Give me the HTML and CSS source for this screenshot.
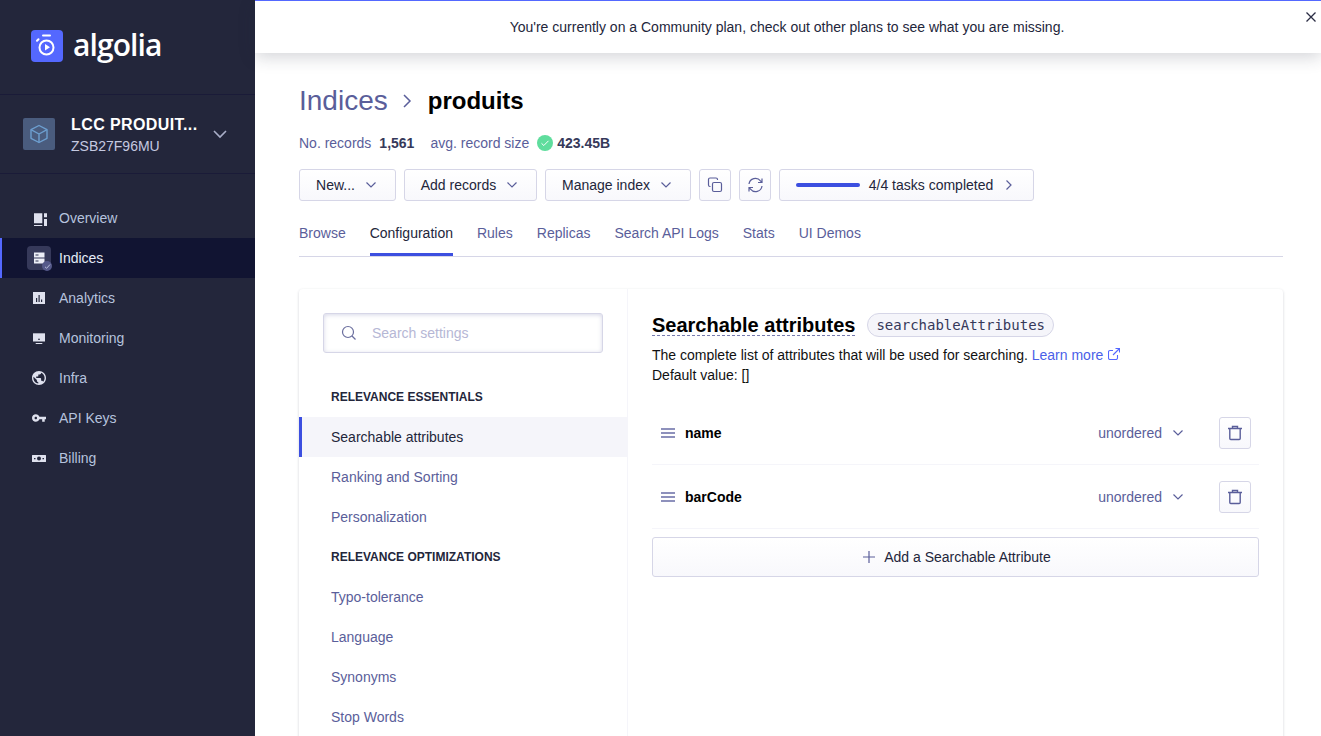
FILE: index.html
```html
<!DOCTYPE html>
<html>
<head>
  <title>Algolia - produits</title>
  <link rel="stylesheet" href="styles.css">
</head>
<body>

<div class="sidebar">
  <div class="logo">
    <div class="logoIcon">
      <svg width="32" height="32" viewBox="0 0 32 32"><g fill="none" stroke="#fff" stroke-width="2"><circle cx="15.500" cy="17.500" r="7"/><path d="M12 5.500h7" stroke-linecap="round"/><path d="M7.500 9.200l-1.500 1.500" stroke-linecap="round"/></g><path d="M14 14l5 3.300-5 3.200z" fill="#fff"/></svg>
    </div>
    <span class="logoText">algolia</span>
  </div>

  <div class="workspace">
    <div class="workspaceIcon">
      <svg width="20" height="20" viewBox="0 0 20 20" fill="none" stroke="#6d9fd0" stroke-width="1.400" stroke-linejoin="round"><path d="M10 1.500l8 4.200v8.600l-8 4.200-8-4.200V5.700z"/><path d="M2 5.700l8 4.300 8-4.300M10 10v8.500"/></svg>
    </div>
    <div class="workspaceText">
      <div class="workspaceName">LCC PRODUIT...</div>
      <div class="workspaceId">ZSB27F96MU</div>
    </div>
    <svg class="workspaceArrow" width="16" height="10" viewBox="0 0 16 10" fill="none" stroke="#a9aec8" stroke-width="1.600"><path d="M2 2l6 6 6-6"/></svg>
  </div>

  <div class="nav">
    <a class="navItem">
      <span class="navIcon">
        <svg width="16" height="16" viewBox="0 0 16 16" fill="#dfe1ee"><path d="M3 3.300h8.300v10H3zM13 3.300h3v4h-3zM13 9h3v7h-3zM3 15h8.300v1H3z"/></svg>
      </span>Overview
    </a>
    <a class="navItem active">
      <span class="navIcon box">
        <svg width="12" height="12" viewBox="0 0 12 12"><path d="M1 .5h10.500v5H1zM1 6.500h10.500v5H1z" fill="#eceef7"/><path d="M2.500 2.500h3v1h-3zM2.500 8.500h3v1h-3z" fill="#2c3050"/></svg>
        <span class="navBadge"><svg width="7" height="7" viewBox="0 0 7 7" fill="none" stroke="#b9bedb" stroke-width="1"><path d="M1 3.800l1.600 1.500L6 1.500"/></svg></span>
      </span>Indices
    </a>
    <a class="navItem">
      <span class="navIcon">
        <svg width="14" height="14" viewBox="0 0 14 14"><path d="M1 1h12v12H1z" fill="#dfe1ee"/><path d="M4 7h1.200v4H4zM6.500 4h1.200v7H6.500zM9 8.500h1.200V11H9z" fill="#23263b"/></svg>
      </span>Analytics
    </a>
    <a class="navItem">
      <span class="navIcon">
        <svg width="14" height="14" viewBox="0 0 14 14" fill="#dfe1ee"><path d="M1 2.300h12v8.200H1z"/><path d="M3.700 12h6.600v1H3.700z"/><path d="M6 7.800h2v1H6z" fill="#23263b"/></svg>
      </span>Monitoring
    </a>
    <a class="navItem">
      <span class="navIcon">
        <svg width="14" height="14" viewBox="2 2 20 20" fill="#dfe1ee"><path d="M12 2C6.480 2 2 6.480 2 12s4.480 10 10 10 10-4.480 10-10S17.520 2 12 2zm-1 17.930c-3.950-.49-7-3.850-7-7.930 0-.62.080-1.210.210-1.790L9 15v1c0 1.100.9 2 2 2v1.930zm6.900-2.540c-.26-.81-1-1.390-1.900-1.390h-1v-3c0-.55-.45-1-1-1H8v-2h2c.55 0 1-.45 1-1V7h2c1.100 0 2-.9 2-2v-.41c2.930 1.190 5 4.060 5 7.410 0 2.080-.8 3.970-2.100 5.390z"/></svg>
      </span>Infra
    </a>
    <a class="navItem">
      <span class="navIcon">
        <svg width="14" height="8" viewBox="1 6 22 12" fill="#dfe1ee"><path d="M12.650 10C11.830 7.670 9.610 6 7 6c-3.310 0-6 2.690-6 6s2.690 6 6 6c2.610 0 4.830-1.670 5.650-4H17v4h4v-4h2v-4H12.650zM7 14c-1.100 0-2-.9-2-2s.9-2 2-2 2 .9 2 2-.9 2-2 2z"/></svg>
      </span>API Keys
    </a>
    <a class="navItem">
      <span class="navIcon">
        <svg width="14" height="7" viewBox="0 0 14 7"><path d="M.5 0h13a.5.5 0 0 1 .5.5v6a.5.5 0 0 1-.5.5H.5a.5.5 0 0 1-.5-.5v-6A.5.5 0 0 1 .5 0z" fill="#dfe1ee"/><circle cx="7" cy="3.500" r="2" fill="#23263b"/><path d="M2 3h1.500v1.200H2zM10.500 3H12v1.200h-1.500z" fill="#23263b"/></svg>
      </span>Billing
    </a>
  </div>
</div>

<div class="main">
  <div class="banner">
    <span>You're currently on a Community plan, check out other plans to see what you are missing.</span>
    <svg class="bannerClose" width="12" height="12" viewBox="0 0 12 12" fill="none" stroke="#2a2c44" stroke-width="1.300"><path d="M1.500 1.500l9 9M10.500 1.500l-9 9"/></svg>
  </div>

  <div class="content">
    <div class="crumbs">
      <span class="crumbLink">Indices</span>
      <svg class="crumbArrow" width="10" height="16" viewBox="0 0 10 16" fill="none" stroke="#5a5e9a" stroke-width="1.500"><path d="M2 2l6 6-6 6"/></svg>
      <span class="crumbName">produits</span>
    </div>

    <div class="stats">
      <span>No. records</span>
      <b class="statValue">1,561</b>
      <span class="statLabel2">avg. record size</span>
      <span class="okDot"><svg width="10" height="10" viewBox="0 0 10 10" fill="none" stroke="#fff" stroke-width="1"><path d="M1.500 5.300l2.300 2.200L8.500 2.800"/></svg></span>
      <b class="statValue2">423.45B</b>
    </div>

    <div class="actions">
      <button class="btn btnNew">New...<svg class="chev" width="12" height="8" viewBox="0 0 12 8"><path d="M1.500 1.500L6 6l4.500-4.500"/></svg></button>
      <button class="btn btnAdd">Add records<svg class="chev" width="12" height="8" viewBox="0 0 12 8"><path d="M1.500 1.500L6 6l4.500-4.500"/></svg></button>
      <button class="btn btnManage">Manage index<svg class="chev" width="12" height="8" viewBox="0 0 12 8"><path d="M1.500 1.500L6 6l4.500-4.500"/></svg></button>
      <button class="btn btnIcon">
        <svg width="16" height="16" viewBox="0 0 16 16" fill="none" stroke="#5a5e9a" stroke-width="1.200"><rect x="5.500" y="5.500" width="9" height="9" rx="1.500"/><path d="M10.500 3V2.500A1.500 1.500 0 0 0 9 1H3A1.500 1.500 0 0 0 1.500 2.500V8A1.500 1.500 0 0 0 3 9.500h.5"/></svg>
      </button>
      <button class="btn btnIcon">
        <svg width="17" height="16" viewBox="0 0 17 16" fill="none" stroke="#5a5e9a" stroke-width="1.200"><path d="M2 7a6.500 6.500 0 0 1 11.500-3.200L15 5.500M15 1.500v4h-4M15 9a6.500 6.500 0 0 1-11.500 3.200L2 10.500M2 14.500v-4h4"/></svg>
      </button>
      <button class="btn btnTasks">
        <span class="taskBar"></span>
        <span>4/4 tasks completed</span>
        <svg class="taskArrow" width="8" height="12" viewBox="0 0 8 12" fill="none" stroke="#5a5e9a" stroke-width="1.200"><path d="M1.500 1.500L6 6l-4.500 4.500"/></svg>
      </button>
    </div>

    <div class="tabs">
      <a class="tab">Browse</a>
      <a class="tab current">Configuration</a>
      <a class="tab">Rules</a>
      <a class="tab">Replicas</a>
      <a class="tab">Search API Logs</a>
      <a class="tab">Stats</a>
      <a class="tab">UI Demos</a>
    </div>

    <div class="card">
      <div class="settings">
        <div class="searchBox">
          <svg width="16" height="16" viewBox="0 0 16 16" fill="none" stroke="#6a6e9e" stroke-width="1.200"><circle cx="7" cy="7" r="5.500"/><path d="M11 11l3.500 3.500"/></svg>
          <span class="searchHint">Search settings</span>
        </div>
        <div class="settingsHead">RELEVANCE ESSENTIALS</div>
        <a class="settingsItem selected">Searchable attributes</a>
        <a class="settingsItem">Ranking and Sorting</a>
        <a class="settingsItem">Personalization</a>
        <div class="settingsHead">RELEVANCE OPTIMIZATIONS</div>
        <a class="settingsItem">Typo-tolerance</a>
        <a class="settingsItem">Language</a>
        <a class="settingsItem">Synonyms</a>
        <a class="settingsItem">Stop Words</a>
      </div>

      <div class="detail">
        <div class="detailTitle">
          <h2>Searchable attributes</h2>
          <code class="pill">searchableAttributes</code>
        </div>
        <p class="detailText">The complete list of attributes that will be used for searching. <a class="learn">Learn more <svg class="learnIcon" width="12" height="12" viewBox="0 0 12 12" fill="none" stroke="#5468ff" stroke-width="1.100"><path d="M9.500 7v3a1.500 1.500 0 0 1-1.500 1.500H2A1.500 1.500 0 0 1 .5 10V4A1.500 1.500 0 0 1 2 2.500h3M7.500.5h4v4M11.500.5L5 7"/></svg></a><br>Default value: []</p>

        <div class="attrRow">
          <svg width="14" height="10" viewBox="0 0 14 10" stroke="#6a6ea6" stroke-width="1.400"><path d="M0 1h14M0 5h14M0 9h14"/></svg>
          <b class="attrName">name</b>
          <span class="attrOrder">unordered</span>
          <svg class="chev" width="12" height="8" viewBox="0 0 12 8"><path d="M1.500 1.500L6 6l4.500-4.500"/></svg>
          <button class="btn btnTrash">
            <svg width="14" height="16" viewBox="0 0 14 16" fill="none" stroke="#5a5e9a" stroke-width="1.400"><path d="M0 3.500h14M4.500 3.500V1.500h5v2M1.800 3.500v10a1 1 0 0 0 1 1h8.400a1 1 0 0 0 1-1v-10"/></svg>
          </button>
        </div>
        <div class="attrRow">
          <svg width="14" height="10" viewBox="0 0 14 10" stroke="#6a6ea6" stroke-width="1.400"><path d="M0 1h14M0 5h14M0 9h14"/></svg>
          <b class="attrName">barCode</b>
          <span class="attrOrder">unordered</span>
          <svg class="chev" width="12" height="8" viewBox="0 0 12 8"><path d="M1.500 1.500L6 6l4.500-4.500"/></svg>
          <button class="btn btnTrash">
            <svg width="14" height="16" viewBox="0 0 14 16" fill="none" stroke="#5a5e9a" stroke-width="1.400"><path d="M0 3.500h14M4.500 3.500V1.500h5v2M1.800 3.500v10a1 1 0 0 0 1 1h8.400a1 1 0 0 0 1-1v-10"/></svg>
          </button>
        </div>

        <button class="btn btnAddAttr">
          <svg width="12" height="12" viewBox="0 0 12 12" stroke="#5a5e9a" stroke-width="1.200"><path d="M6 0v12M0 6h12"/></svg>
          Add a Searchable Attribute
        </button>
      </div>
    </div>
  </div>
</div>

</body>
</html>
```

FILE: styles.css
```css
body, html {
  height: 100%;
  margin: 0;
  overflow: hidden;
  font-family: "Liberation Sans", Arial, sans-serif;
  font-size: 14px;
  color: #23263b;
  background-color: white;
}

body {
  display: flex;
}

/* sidebar */

.sidebar {
  width: 255px;
  flex-shrink: 0;
  background-color: #23263b;
}

.logo {
  height: 95px;
  box-sizing: border-box;
  padding: 30px 0 0 31px;
  display: flex;
  align-items: flex-start;
  border-bottom: 1px solid #1a1b38;
}

.logoIcon {
  width: 32px;
  height: 32px;
  background-color: #5468ff;
  border-radius: 4px;
}

.logoText {
  margin-left: 10px;
  font-family: "Open Sans", sans-serif;
  font-size: 30px;
  line-height: 30px;
  font-weight: 600;
  letter-spacing: -0.9px;
  color: white;
}

.workspace {
  height: 79px;
  box-sizing: border-box;
  padding-left: 23px;
  display: flex;
  align-items: center;
  border-bottom: 1px solid #1a1b38;
}

.workspaceIcon {
  width: 32px;
  height: 32px;
  background-color: #4a5c7e;
  border-radius: 2px;
  display: flex;
  align-items: center;
  justify-content: center;
}

.workspaceText {
  margin-left: 16px;
  width: 141px;
  padding-top: 2px;
}

.workspaceName {
  color: white;
  font-size: 16px;
  font-weight: bold;
  line-height: 20px;
  letter-spacing: 0.4px;
}

.workspaceId {
  color: #c5c9e0;
  line-height: 20px;
  margin-top: 1px;
}

.nav {
  padding-top: 24px;
}

.navItem {
  height: 40px;
  display: flex;
  align-items: center;
  color: #b6c3de;
  box-sizing: border-box;
  padding-left: 27px;
}

.navItem.active {
  background-color: #111432;
  border-left: 2px solid #5468ff;
  padding-left: 25px;
  color: #e4ebf7;
}

.navIcon {
  position: relative;
  width: 24px;
  height: 24px;
  margin-right: 8px;
  display: flex;
  align-items: center;
  justify-content: center;
}

.navIcon.box {
  background-color: #36395a;
  border-radius: 4px;
}

.navBadge {
  position: absolute;
  right: -1px;
  bottom: -1px;
  width: 10px;
  height: 10px;
  border-radius: 50%;
  background-color: #55598a;
  display: flex;
  align-items: center;
  justify-content: center;
}

/* main part */

.main {
  flex: 1;
  min-width: 0;
  display: flex;
  flex-direction: column;
}

.banner {
  position: relative;
  height: 53px;
  box-sizing: border-box;
  flex-shrink: 0;
  border-top: 1px solid #5468ff;
  display: flex;
  align-items: center;
  justify-content: center;
  padding-right: 2px;
  background-color: white;
  box-shadow: 0 4px 16px rgba(35, 38, 59, 0.2);
}

.bannerClose {
  position: absolute;
  top: 10px;
  right: 4px;
}

.content {
  padding: 0 38px 0 44px;
}

.crumbs {
  display: flex;
  align-items: center;
  margin-top: 31px;
  height: 34px;
}

.crumbLink {
  font-size: 28px;
  color: #5a5e9a;
}

.crumbArrow {
  margin: 0 16px 0 14px;
}

.crumbName {
  font-size: 24px;
  font-weight: bold;
  color: black;
}

.stats {
  display: flex;
  align-items: center;
  margin-top: 15px;
  height: 20px;
  color: #5a5e9a;
}

.statValue {
  margin-left: 8px;
  color: #36395a;
}

.statLabel2 {
  margin-left: 16px;
}

.okDot {
  width: 16px;
  height: 16px;
  margin-left: 8px;
  border-radius: 50%;
  background-color: #5fdd9d;
  display: flex;
  align-items: center;
  justify-content: center;
}

.statValue2 {
  margin-left: 4px;
  color: #36395a;
}

.actions {
  display: flex;
  gap: 8px;
  margin-top: 16px;
}

.btn {
  height: 32px;
  box-sizing: border-box;
  font-family: "Liberation Sans", Arial, sans-serif;
  font-size: 14px;
  color: #23263b;
  background: linear-gradient(#ffffff, #f8f8fc);
  border: 1px solid #d6d6e7;
  border-radius: 3px;
  display: flex;
  align-items: center;
  justify-content: center;
  padding: 0;
}

.chev {
  fill: none;
  stroke: #5a5e9a;
  stroke-width: 1.2;
}

.btnNew {
  width: 97px;
  padding-right: 2px;
}

.btnNew .chev, .btnAdd .chev, .btnManage .chev {
  margin-left: 10px;
}

.btnAdd {
  width: 133px;
  padding-right: 2px;
}

.btnManage {
  width: 146px;
  padding-right: 2px;
}

.btnIcon {
  width: 32px;
}

.btnTasks {
  width: 255px;
  padding-right: 4px;
}

.taskBar {
  width: 64px;
  height: 4px;
  border-radius: 2px;
  background-color: #3c4fe0;
  margin-right: 9px;
}

.taskArrow {
  margin-left: 12px;
}

.tabs {
  display: flex;
  gap: 24px;
  margin-top: 16px;
  height: 39px;
  border-bottom: 1px solid #d6d6e7;
}

.tab {
  height: 39px;
  box-sizing: border-box;
  line-height: 33px;
  color: #5a5e9a;
}

.tab.current {
  color: #23263b;
  border-bottom: 3px solid #3c4fe0;
}

.card {
  display: flex;
  margin-top: 32px;
  height: 600px;
  border-radius: 4px;
  box-shadow: 0 1px 3px rgba(35, 38, 59, 0.2);
}

.settings {
  width: 328px;
  flex-shrink: 0;
  border-right: 1px solid #f5f5fa;
}

.searchBox {
  margin: 24px;
  height: 40px;
  box-sizing: border-box;
  border: 1px solid #d6d6e7;
  border-radius: 3px;
  box-shadow: inset 0 1px 4px rgba(119, 122, 175, 0.3);
  display: flex;
  align-items: center;
  padding-left: 17px;
}

.searchHint {
  margin-left: 15px;
  color: #b6b7d5;
}

.settingsHead {
  height: 40px;
  line-height: 40px;
  padding-left: 32px;
  font-size: 12px;
  font-weight: bold;
  color: #23263b;
}

.settingsItem {
  display: block;
  height: 40px;
  line-height: 40px;
  padding-left: 32px;
  color: #5a5e9a;
}

.settingsItem.selected {
  padding-left: 29px;
  border-left: 3px solid #3c4fe0;
  background-color: #f5f5fa;
  color: #23263b;
}

.detail {
  flex: 1;
  min-width: 0;
  padding: 24px 24px 0 24px;
}

.detailTitle {
  display: flex;
  align-items: center;
  height: 24px;
}

.detailTitle h2 {
  margin: 0;
  font-size: 20px;
  line-height: 20px;
  color: black;
  border-bottom: 1px dashed #777aaf;
}

.pill {
  margin-left: 12px;
  height: 24px;
  box-sizing: border-box;
  padding: 0 8px;
  line-height: 22px;
  font-family: "DejaVu Sans Mono", monospace;
  font-size: 14px;
  color: #36395a;
  background-color: #f5f5fa;
  border: 1px solid #d6d6e7;
  border-radius: 12px;
}

.detailText {
  margin: 8px 0 0 0;
  line-height: 20px;
  color: #111;
}

.learn {
  color: #4a5fe8;
}

.learnIcon {
  margin-left: 1px;
}

.attrRow {
  display: flex;
  align-items: center;
  height: 64px;
  box-sizing: border-box;
  padding: 0 8px 0 9px;
  border-bottom: 1px solid #f5f5fa;
}

.detailText + .attrRow {
  margin-top: 16px;
}

.attrName {
  margin-left: 10px;
  color: black;
  flex: 1;
}

.attrOrder {
  color: #5a5e9a;
  margin-right: 10px;
}

.btnTrash {
  width: 32px;
  margin-left: 35px;
}

.btnAddAttr {
  width: 100%;
  height: 40px;
  margin-top: 8px;
  padding-left: 3px;
  gap: 9px;
}
```
